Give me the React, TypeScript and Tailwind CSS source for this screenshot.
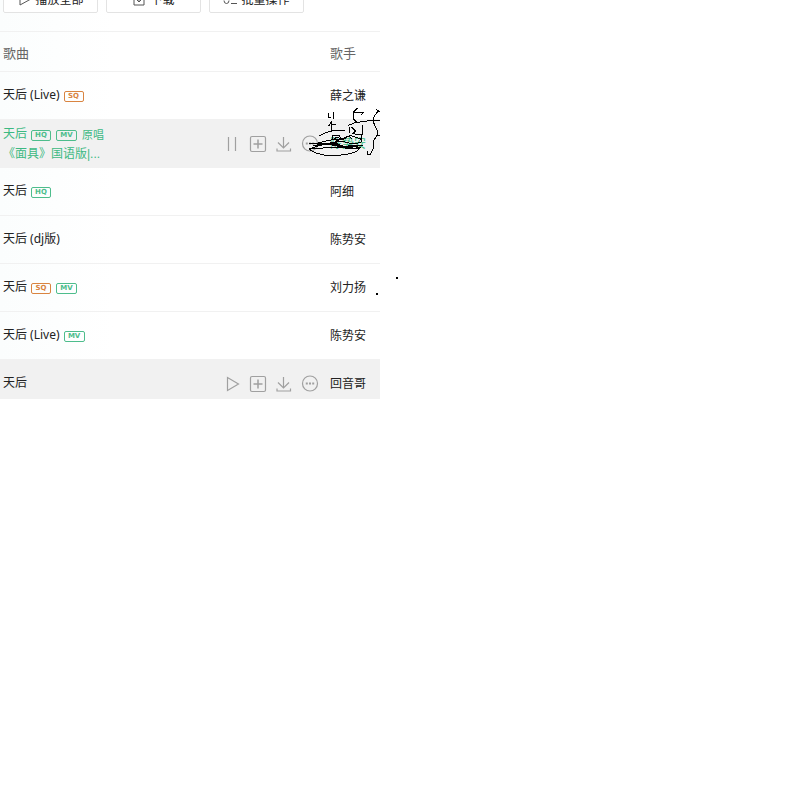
import React from "react";

type Tag = "SQ" | "HQ" | "MV";

interface Song {
  title: string;
  singer: string;
  tags: Tag[];
  note?: string;
  subtitle?: string;
  state?: "playing" | "hover";
}

const songs: Song[] = [
  { title: "天后 (Live)", singer: "薛之谦", tags: ["SQ"] },
  { title: "天后", singer: "陈势安", tags: ["HQ", "MV"], note: "原唱", subtitle: "《面具》国语版|...", state: "playing" },
  { title: "天后", singer: "阿细", tags: ["HQ"] },
  { title: "天后 (dj版)", singer: "陈势安", tags: [] },
  { title: "天后", singer: "刘力扬", tags: ["SQ", "MV"] },
  { title: "天后 (Live)", singer: "陈势安", tags: ["MV"] },
  { title: "天后", singer: "回音哥", tags: [], state: "hover" },
];

function QualityTag({ tag }: { tag: Tag }) {
  return (
    <span
      className={`flex h-[11px] shrink-0 items-center justify-center rounded-xs border font-['DejaVu_Sans',sans-serif] text-[7px] font-bold leading-none ${
        tag === "MV" ? "w-[21px]" : "w-5"
      } ${tag === "SQ" ? "border-[#d98440] text-[#d98440]" : "border-[#4dbd8c] text-[#4dbd8c]"}`}
    >
      {tag}
    </span>
  );
}

function Icon({ children }: { children: React.ReactNode }) {
  return (
    <svg width="18" height="18" viewBox="0 0 18 18" fill="none" stroke="currentColor" strokeWidth="1.2" aria-hidden="true">
      {children}
    </svg>
  );
}

function RowActions({ playing }: { playing: boolean }) {
  return (
    <div className="flex gap-2 text-[#a0a0a0]">
      <button type="button" aria-label={playing ? "暂停" : "播放"}>
        <Icon>{playing ? <path d="M5.5 2v14M12.5 2v14" /> : <path d="M4.5 2.5v13L15.5 9z" />}</Icon>
      </button>
      <button type="button" aria-label="添加到">
        <Icon>
          <rect x="1.5" y="1.5" width="15" height="15" rx="1.5" />
          <path d="M9 4.5v9M4.5 9h9" strokeWidth="1.5" />
        </Icon>
      </button>
      <button type="button" aria-label="下载">
        <Icon>
          <path d="M8.500 2v11M3 7.500L8.500 13 14 7.500M2 13.500v2.500h13.500v-2.500" />
        </Icon>
      </button>
      <button type="button" aria-label="更多">
        <Icon>
          <circle cx="9" cy="8.500" r="7.500" />
          <path d="M4.800 8.500h2M8 8.500h2M11.200 8.500h2" strokeWidth="2" />
        </Icon>
      </button>
    </div>
  );
}

function SongRow({ song, last }: { song: Song; last: boolean }) {
  const playing = song.state === "playing";
  const cell = `p-0 align-top ${last ? "" : "border-b border-[#f1f1f1]"}`;
  return (
    <tr className={`${last ? "h-[39px]" : "h-12"} ${song.state ? "bg-[#f1f1f1]" : ""} ${playing ? "text-[#3cb982]" : "text-[#222222]"}`}>
      <td className={`${cell} pl-[3px] ${song.subtitle ? "pt-1" : "pt-[13px]"}`}>
        <div className="flex h-5 items-center gap-1 whitespace-nowrap leading-5">
          <span>{song.title}</span>
          <span className="flex items-center gap-[5px] pt-[2px]">
            {song.tags.map((tag) => (
              <QualityTag key={tag} tag={tag} />
            ))}
            {song.note && <span className="text-[11px]">{song.note}</span>}
          </span>
        </div>
        {song.subtitle && (
          <div className="h-5 font-['Liberation_Sans','Noto_Sans_CJK_SC',sans-serif] leading-5 whitespace-nowrap">{song.subtitle}</div>
        )}
      </td>
      <td className={`${cell} pt-[15px]`}>{song.state && <RowActions playing={playing} />}</td>
      <td className={`${cell} whitespace-nowrap pt-[14px] leading-5`}>{song.singer}</td>
    </tr>
  );
}

function Doodle() {
  return (
    <svg
      className="pointer-events-none absolute top-20 left-[300px]"
      width="110"
      height="220"
      viewBox="0 0 330 660"
      fill="none"
      stroke="#000000"
      strokeWidth="3"
      strokeLinejoin="round"
      shapeRendering="crispEdges"
      aria-hidden="true"
    >
      <svg width="240" height="270">
        <path d="M84 98V111H92M101 97V116M95 122V152M95 124L86 138M95 134H108M95 150H134M57 168L76 158L96 153" />
        <path d="M173 83L161 96V117L173 130M162 97H191L184 105M143 137L165 128L200 123L242 121" />
        <path d="M149 142V158M155 142L167 153L160 159M187 134L188 150L184 178M157 161L184 165" />
        <path d="M237 90L222 110L220 126L231 150V166M228 88L241 97M228 166H242M231 166L222 180L220 206L212 222L203 223V212" />
        <path d="M28 190L45 192L69 185L93 180L122 178L151 166L184 178L183 187L160 192L125 184L82 190L35 204" />
        <path d="M28 208L45 218L72 225L108 227L141 223L169 215L182 203L157 205L118 202L70 204L28 206" />
        <path d="M96 181V167H117L128 180L145 168L157 177M100 180L110 171L123 177L105 185" />
        <path d="M31 190L90 190L130 199L188 197M70 194L110 190L140 206L180 206M40 197L85 191L105 197L160 202" strokeWidth="4" />
      </svg>
      <path d="M288 593h6M228 642h6" strokeWidth="6" />
    </svg>
  );
}

function ToolButton({ label, children }: { label: string; children: React.ReactNode }) {
  return (
    <button type="button" className="flex h-[26px] w-[95px] shrink-0 items-center justify-center gap-1 rounded-xs border border-[#e3e3e3] bg-white">
      <svg width="14" height="14" viewBox="0 0 14 14" fill="none" stroke="#555555" aria-hidden="true">
        {children}
      </svg>
      {label}
    </button>
  );
}

export default function App() {
  return (
    <main className="relative min-h-screen bg-white font-['Noto_Sans','Noto_Sans_CJK_SC',sans-serif] text-xs text-[#222222]">
      <section className="max-w-[380px] bg-linear-to-r from-[#fbfdfd] to-white to-30%">
        <div className="flex h-[13px] items-end gap-2 overflow-hidden pl-[3px]">
          <ToolButton label="播放全部">
            <path d="M3 1v11L13 6.500z" />
          </ToolButton>
          <ToolButton label="下载">
            <path d="M4 3H2v9h10V3h-2M7 1v8M4.500 6.500L7 9l2.500-2.500" />
          </ToolButton>
          <ToolButton label="批量操作">
            <path d="M1 3l2 2 3-3M1 7.500q0 3 2.500 3T6 7.500M8 4h6M8 10.500h6" />
          </ToolButton>
        </div>
        <table className="mt-[18px] w-full table-fixed border-separate border-spacing-0 border-t border-[#f1f1f1]">
          <colgroup>
            <col />
            <col className="w-[107px]" />
            <col className="w-[50px]" />
          </colgroup>
          <thead>
            <tr className="h-10 text-left text-[13px] text-[#666666]">
              <th scope="col" colSpan={2} className="border-b border-[#f1f1f1] p-0 pt-1 pl-[3px] font-normal">
                歌曲
              </th>
              <th scope="col" className="border-b border-[#f1f1f1] p-0 pt-1 font-normal">
                歌手
              </th>
            </tr>
          </thead>
          <tbody>
            {songs.map((song, i) => (
              <SongRow key={i} song={song} last={i === songs.length - 1} />
            ))}
          </tbody>
        </table>
      </section>
      <Doodle />
    </main>
  );
}
